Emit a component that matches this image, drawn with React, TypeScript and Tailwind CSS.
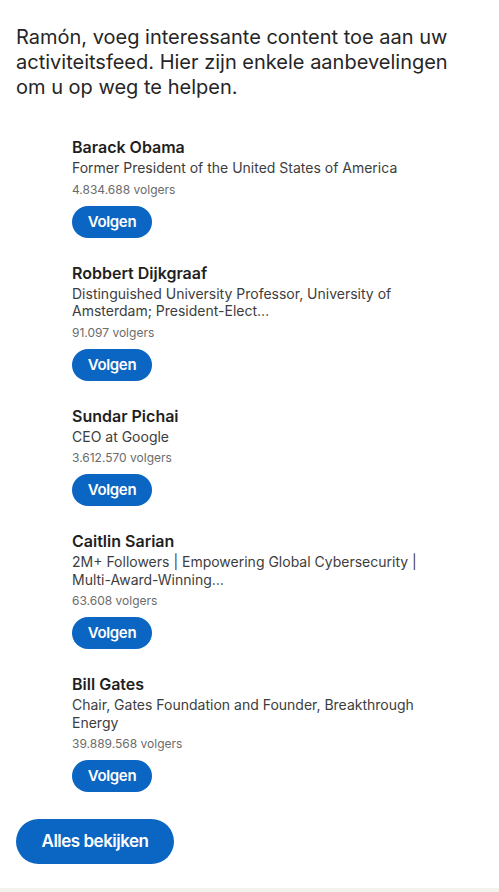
const recommendations = [
  {
    name: "Barack Obama",
    headline: "Former President of the United States of America",
    followers: "4.834.688 volgers",
  },
  {
    name: "Robbert Dijkgraaf",
    headline: "Distinguished University Professor, University of Amsterdam; President-Elect…",
    followers: "91.097 volgers",
  },
  {
    name: "Sundar Pichai",
    headline: "CEO at Google",
    followers: "3.612.570 volgers",
  },
  {
    name: "Caitlin Sarian",
    headline: "2M+ Followers | Empowering Global Cybersecurity | Multi-Award-Winning…",
    followers: "63.608 volgers",
  },
  {
    name: "Bill Gates",
    headline: "Chair, Gates Foundation and Founder, Breakthrough Energy",
    followers: "39.889.568 volgers",
  },
];

function RecommendationRow({ name, headline, followers }: { name: string; headline: string; followers: string }) {
  return (
    <li className="flex gap-2 list-none">
      {/* avatar slot, image not loaded */}
      <div className="w-12 shrink-0" />
      <div className="flex flex-col items-start pr-12">
        <h3 className="text-[16px] leading-6 font-semibold text-[#1f1f1f]">{name}</h3>
        <p className="text-[14px] leading-[17.5px] text-[#3d3d3d]">{headline}</p>
        <p className="mt-[5px] text-[12px] leading-4 text-[#6b6b6b]">{followers}</p>
        <button className="mt-2 h-8 w-[80px] rounded-full bg-[#0a66c2] text-white text-[15px] tracking-[-0.35px] font-semibold leading-5">
          Volgen
        </button>
      </div>
    </li>
  );
}

export default function App() {
  return (
    <div className="min-h-[892px] bg-white flex flex-col" style={{ fontFamily: "Inter, 'Noto Sans', sans-serif" }}>
      <section className="px-4 pt-[25px] pb-6">
        <h2 className="mr-7 text-[20px] leading-[25px] text-[#262626]">
          Ramón, voeg interessante content toe aan uw activiteitsfeed. Hier zijn enkele aanbevelingen om u op weg te helpen.
        </h2>
        <ul className="mt-[35px] flex flex-col gap-[23px]">
          {recommendations.map((r) => (
            <RecommendationRow key={r.name} {...r} />
          ))}
        </ul>
        <button className="mt-[27px] h-[45px] w-[158px] rounded-full bg-[#0a66c2] text-white text-[17px] tracking-[-0.5px] font-semibold">
          Alles bekijken
        </button>
      </section>
      <div className="flex-1 bg-[#f4f2ee]" />
    </div>
  );
}
